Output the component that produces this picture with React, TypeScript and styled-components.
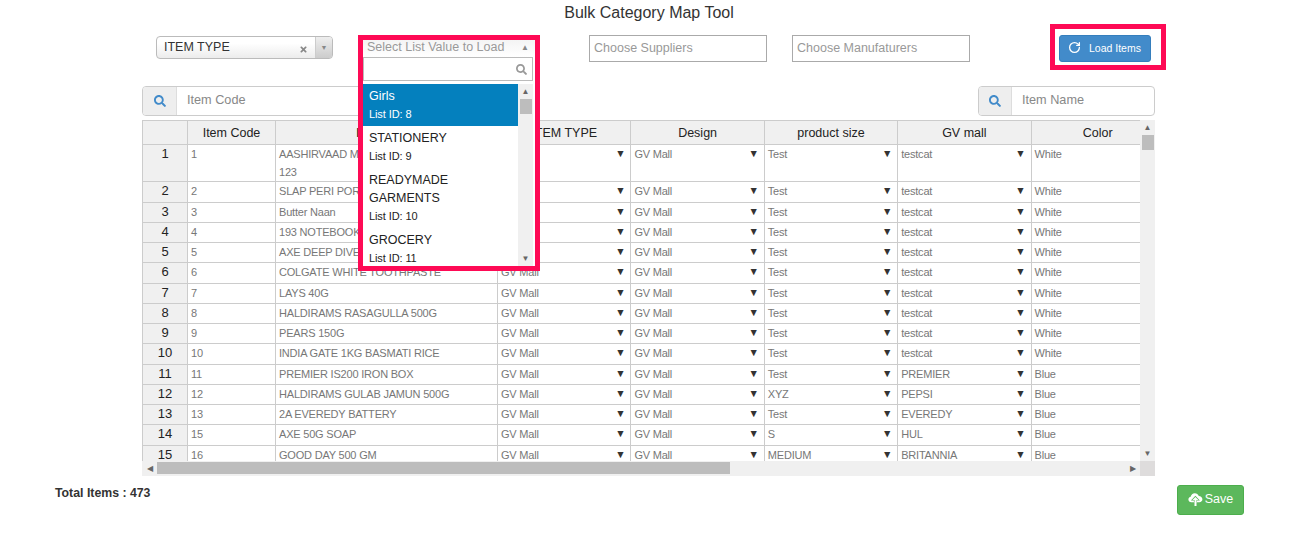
import React from "react";
import styled, { createGlobalStyle } from "styled-components";
import { FaSearch, FaTimes } from "react-icons/fa";
import { RotateCw } from "lucide-react";

const Global = createGlobalStyle`
  html, body { margin: 0; padding: 0; background: #fff; }
  body { font-family: "Liberation Sans", Arial, sans-serif; color: #333; }
  * { box-sizing: border-box; }
`;

const Page = styled.div`
  width: 1307px;
  height: 543px;
  overflow: hidden;
  position: relative;
`;

const Title = styled.h1`
  margin: 0;
  height: 24px;
  font-size: 16px;
  font-weight: 400;
  line-height: 26px;
  text-align: center;
  color: #333;
  padding-right: 9px;
`;

const Toolbar = styled.div`
  height: 62px;
  padding-left: 156px;
  display: flex;
  align-items: flex-start;
`;

const SelectBox = styled.div`
  width: 177px;
  height: 23px;
  margin-top: 12px;
  margin-right: 25px;
  display: flex;
  align-items: center;
  border: 1px solid #bbb;
  border-radius: 4px;
  background: linear-gradient(#fff 30%, #ececec);
  font-size: 12.5px;
  color: #333;
`;

const SelectText = styled.span`
  flex: 1;
  padding-left: 7px;
  padding-bottom: 1px;
`;

const ClearIcon = styled.span`
  width: 12px;
  display: flex;
  align-items: center;
  margin-right: 4px;
  margin-top: 4px;
  color: #888;
  font-size: 9px;
`;

const SelectArrow = styled.span`
  width: 17px;
  height: 100%;
  border-left: 1px solid #ccc;
  background: linear-gradient(#eee, #ccc);
  border-radius: 0 3px 3px 0;
  color: #888;
  font-size: 7px;
  display: flex;
  align-items: center;
  justify-content: center;
`;

const DropSlot = styled.div`
  width: 182px;
  margin-top: 11px;
  margin-right: 49px;
  height: 0;
  position: relative;
`;

const Drop = styled.div`
  position: absolute;
  z-index: 5;
  left: 0;
  top: 0;
  width: 182px;
  height: 236px;
  border: 5px solid #fe0a55;
  background: #fff;
  display: flex;
  flex-direction: column;
  overflow: hidden;
`;

const DropHead = styled.div`
  height: 17px;
  flex: none;
  display: flex;
  align-items: center;
  justify-content: space-between;
  padding: 0 6px 3px 4px;
  background: linear-gradient(#f4f4f4, #fff);
  color: #999;
  font-size: 12.5px;
  white-space: nowrap;
`;

const HeadCaret = styled.span`
  font-size: 8px;
  color: #888;
`;

const DropSearch = styled.div`
  height: 24px;
  flex: none;
  margin: 0 2px 0 0;
  border: 1px solid #bbb;
  display: flex;
  align-items: center;
  justify-content: flex-end;
  padding-right: 5px;
  color: #999;
  font-size: 11px;
`;

const DropBody = styled.div`
  flex: 1;
  min-height: 0;
  margin: 3px 2px 0 0;
  display: flex;
  overflow: hidden;
`;

const OptionList = styled.div`
  flex: 1;
  min-width: 0;
  overflow: hidden;
`;

const Option = styled.div<{ $active?: boolean }>`
  padding: 3px 6px 2px;
  background: ${(p) => (p.$active ? "#0480be" : "#fff")};
  color: ${(p) => (p.$active ? "#fff" : "#222")};
`;

const OptionName = styled.div`
  font-size: 12.5px;
  line-height: 18px;
`;

const OptionId = styled.div`
  font-size: 11px;
  letter-spacing: -0.1px;
  line-height: 19px;
`;

const ScrollY = styled.div`
  width: 15px;
  flex: none;
  background: #f0f0f0;
  display: flex;
  flex-direction: column;
  align-items: center;
  position: relative;
`;

const ScrollGlyph = styled.span`
  height: 15px;
  flex: none;
  width: 100%;
  font-size: 8px;
  line-height: 15px;
  text-align: center;
  color: #666;
`;

const ThumbY = styled.div`
  width: 12px;
  height: 15px;
  flex: none;
  background: #bdbdbd;
`;

const Spacer = styled.div`
  flex: 1;
`;

const TextField = styled.div<{ $gap: number }>`
  width: 178px;
  height: 27px;
  margin-top: 11px;
  margin-right: ${(p) => p.$gap}px;
  border: 1px solid #aaa;
  padding-left: 4px;
  color: #999;
  font-size: 12.5px;
  line-height: 25px;
`;

const Highlight = styled.div`
  width: 116px;
  height: 46px;
  border: 5px solid #fe0a55;
  padding: 6px 0 0 4px;
`;

const LoadButton = styled.button`
  width: 92px;
  height: 27px;
  border: 1px solid #357ebd;
  border-radius: 3px;
  background: #428bca;
  color: #fff;
  font: 400 10.5px "Liberation Sans", Arial, sans-serif;
  display: flex;
  align-items: center;
  gap: 8px;
  padding: 0 0 2px 8px;
`;

const SearchRow = styled.div`
  height: 30px;
  margin: 0 152px 4px 142px;
  display: flex;
  justify-content: space-between;
`;

const SearchGroup = styled.div<{ $width: number }>`
  width: ${(p) => p.$width}px;
  display: flex;
  border: 1px solid #ccc;
  border-radius: 4px;
  overflow: hidden;
`;

const SearchAddon = styled.span<{ $width: number }>`
  width: ${(p) => p.$width}px;
  flex: none;
  background: #eee;
  border-right: 1px solid #ddd;
  color: #428bca;
  font-size: 12px;
  display: flex;
  align-items: center;
  justify-content: center;
`;

const SearchHint = styled.span`
  padding-left: 10px;
  font-size: 12.7px;
  line-height: 27px;
  color: #888;
`;

const TableShell = styled.div`
  width: 1013px;
  height: 356px;
  margin-left: 142px;
  display: flex;
  flex-direction: column;
`;

const TableMain = styled.div`
  height: 341px;
  display: flex;
`;

const Viewport = styled.div`
  flex: 1;
  min-width: 0;
  overflow: hidden;
`;

const RowBase = styled.div`
  width: 1023px;
  display: grid;
  grid-template-columns: 46px 88px 222px 133.4px 133.4px 133.4px 133.4px 133.4px;
`;

const HeadRow = styled(RowBase)`
  height: 24.5px;
  background: #f0f0f0;
  border-top: 1px solid #ccc;
  border-bottom: 1px solid #ccc;
`;

const HeadCell = styled.div`
  border-right: 1px solid #ccc;
  border-left: 0;
  font-size: 12.5px;
  line-height: 24px;
  text-align: center;
  color: #222;
  &:first-child { border-left: 1px solid #ccc; }
`;

const BodyRow = styled(RowBase)<{ $tall?: boolean }>`
  height: ${(p) => (p.$tall ? "37.75px" : "20.25px")};
  border-bottom: 1px solid #ccc;
`;

const RowNum = styled.div`
  background: #f0f0f0;
  border-left: 1px solid #ccc;
  border-right: 1px solid #ccc;
  text-align: center;
  font-size: 13px;
  line-height: 18px;
  color: #222;
`;

const Cell = styled.div`
  border-right: 1px solid #ccc;
  padding: 0 3px;
  font-size: 11px;
  letter-spacing: -0.2px;
  line-height: 18.5px;
  color: #777;
  overflow: hidden;
`;

const DropCell = styled(Cell)`
  display: flex;
  justify-content: space-between;
  padding-right: 5px;
`;

const CellArrow = styled.span`
  color: #333;
  font-size: 10.5px;
  line-height: 17px;
`;

const ScrollX = styled.div`
  height: 15px;
  display: flex;
  background: #f0f0f0;
`;

const XGlyph = styled.span`
  width: 15px;
  flex: none;
  text-align: center;
  font-size: 8px;
  line-height: 15px;
  color: #666;
`;

const ThumbX = styled.div`
  width: 573px;
  height: 12px;
  margin-top: 1px;
  background: #bdbdbd;
`;

const Corner = styled.div`
  width: 15px;
  flex: none;
  background: #dedcdc;
`;

const Footer = styled.div`
  display: flex;
  justify-content: space-between;
  align-items: flex-start;
  padding: 9px 63px 0 55px;
`;

const Total = styled.div`
  font-size: 12.3px;
  font-weight: 700;
  line-height: 17px;
  color: #333;
`;

const SaveButton = styled.button`
  width: 67px;
  height: 30px;
  border: 1px solid #4cae4c;
  border-radius: 3px;
  background: #5cb85c;
  color: #fff;
  font: 400 12.5px "Liberation Sans", Arial, sans-serif;
  display: flex;
  align-items: center;
  justify-content: center;
  gap: 2px;
  padding: 0 0 2px;
`;

const UploadCloud = () => (
  <svg width="15" height="15" viewBox="0 0 15 15" aria-hidden="true">
    <path fill="#fff" d="M3.4 10.2C1.6 10.2.4 9 .4 7.5c0-1.4 1-2.5 2.3-2.700C3 2.700 4.700 1.200 6.800 1.200c1.800 0 3.400 1.100 4 2.800 1.900 0 3.600 1.500 3.600 3.300 0 1.600-1.300 2.900-3 2.900z" />
    <path fill="#5cb85c" d="M7.4 3.8 2.900 8.400h3v1.800h3V8.400h3z" />
    <path fill="#fff" d="M7.4 4.900 4.500 7.900h2v6h2v-6h1.900z" />
  </svg>
);

type R = [number, string, string, string, string, string, string, string];
const base = (n: number, code: number, name: string, t = "Test", g = "testcat", c = "White"): R => [n, String(code), name, "GV Mall", "GV Mall", t, g, c];
const rows: R[] = [
  base(1, 1, "AASHIRVAAD MULTIGRAIN WHEAT ATTA 123"),
  base(2, 2, "SLAP PERI PORI"),
  base(3, 3, "Butter Naan"),
  base(4, 4, "193 NOTEBOOK"),
  base(5, 5, "AXE DEEP DIVE"),
  base(6, 6, "COLGATE WHITE TOOTHPASTE"),
  base(7, 7, "LAYS 40G"),
  base(8, 8, "HALDIRAMS RASAGULLA 500G"),
  base(9, 9, "PEARS 150G"),
  base(10, 10, "INDIA GATE 1KG BASMATI RICE"),
  base(11, 11, "PREMIER IS200 IRON BOX", "Test", "PREMIER", "Blue"),
  base(12, 12, "HALDIRAMS GULAB JAMUN 500G", "XYZ", "PEPSI", "Blue"),
  base(13, 13, "2A EVEREDY BATTERY", "Test", "EVEREDY", "Blue"),
  base(14, 15, "AXE 50G SOAP", "S", "HUL", "Blue"),
  base(15, 16, "GOOD DAY 500 GM", "MEDIUM", "BRITANNIA", "Blue"),
];

const heads = ["", "Item Code", "Item Name", "ITEM TYPE", "Design", "product size", "GV mall", "Color"];

const options = [
  { name: "Girls", id: 8, active: true },
  { name: "STATIONERY", id: 9 },
  { name: "READYMADE GARMENTS", id: 10 },
  { name: "GROCERY", id: 11 },
];

const Pick = ({ v }: { v: string }) => (
  <DropCell>
    <span>{v}</span>
    <CellArrow>▼</CellArrow>
  </DropCell>
);

export default function App() {
  return (
    <Page>
      <Global />
      <Title>Bulk Category Map Tool</Title>
      <Toolbar>
        <SelectBox>
          <SelectText>ITEM TYPE</SelectText>
          <ClearIcon><FaTimes /></ClearIcon>
          <SelectArrow>▼</SelectArrow>
        </SelectBox>
        <DropSlot>
          <Drop>
            <DropHead>
              Select List Value to Load
              <HeadCaret>▲</HeadCaret>
            </DropHead>
            <DropSearch><FaSearch /></DropSearch>
            <DropBody>
              <OptionList>
                {options.map((o) => (
                  <Option key={o.id} $active={o.active}>
                    <OptionName>{o.name}</OptionName>
                    <OptionId>List ID: {o.id}</OptionId>
                  </Option>
                ))}
              </OptionList>
              <ScrollY>
                <ScrollGlyph>▲</ScrollGlyph>
                <ThumbY />
                <Spacer />
                <ScrollGlyph>▼</ScrollGlyph>
              </ScrollY>
            </DropBody>
          </Drop>
        </DropSlot>
        <TextField $gap={25}>Choose Suppliers</TextField>
        <TextField $gap={80}>Choose Manufaturers</TextField>
        <Highlight>
          <LoadButton>
            <RotateCw size={13} strokeWidth={2.4} />
            Load Items
          </LoadButton>
        </Highlight>
      </Toolbar>
      <SearchRow>
        <SearchGroup $width={240}>
          <SearchAddon $width={34}><FaSearch /></SearchAddon>
          <SearchHint>Item Code</SearchHint>
        </SearchGroup>
        <SearchGroup $width={177}>
          <SearchAddon $width={33}><FaSearch /></SearchAddon>
          <SearchHint>Item Name</SearchHint>
        </SearchGroup>
      </SearchRow>
      <TableShell>
        <TableMain>
          <Viewport>
            <HeadRow>
              {heads.map((h, i) => <HeadCell key={i}>{h}</HeadCell>)}
            </HeadRow>
            {rows.map((r, i) => (
              <BodyRow key={r[0]} $tall={i === 0}>
                <RowNum>{r[0]}</RowNum>
                <Cell>{r[1]}</Cell>
                <Cell>{r[2]}</Cell>
                <Pick v={r[3]} />
                <Pick v={r[4]} />
                <Pick v={r[5]} />
                <Pick v={r[6]} />
                <Cell>{r[7]}</Cell>
              </BodyRow>
            ))}
          </Viewport>
          <ScrollY>
            <ScrollGlyph>▲</ScrollGlyph>
            <ThumbY />
            <Spacer />
            <ScrollGlyph>▼</ScrollGlyph>
          </ScrollY>
        </TableMain>
        <ScrollX>
          <XGlyph>◀</XGlyph>
          <ThumbX />
          <Spacer />
          <XGlyph>▶</XGlyph>
          <Corner />
        </ScrollX>
      </TableShell>
      <Footer>
        <Total>Total Items : 473</Total>
        <SaveButton>
          <UploadCloud />
          Save
        </SaveButton>
      </Footer>
    </Page>
  );
}
